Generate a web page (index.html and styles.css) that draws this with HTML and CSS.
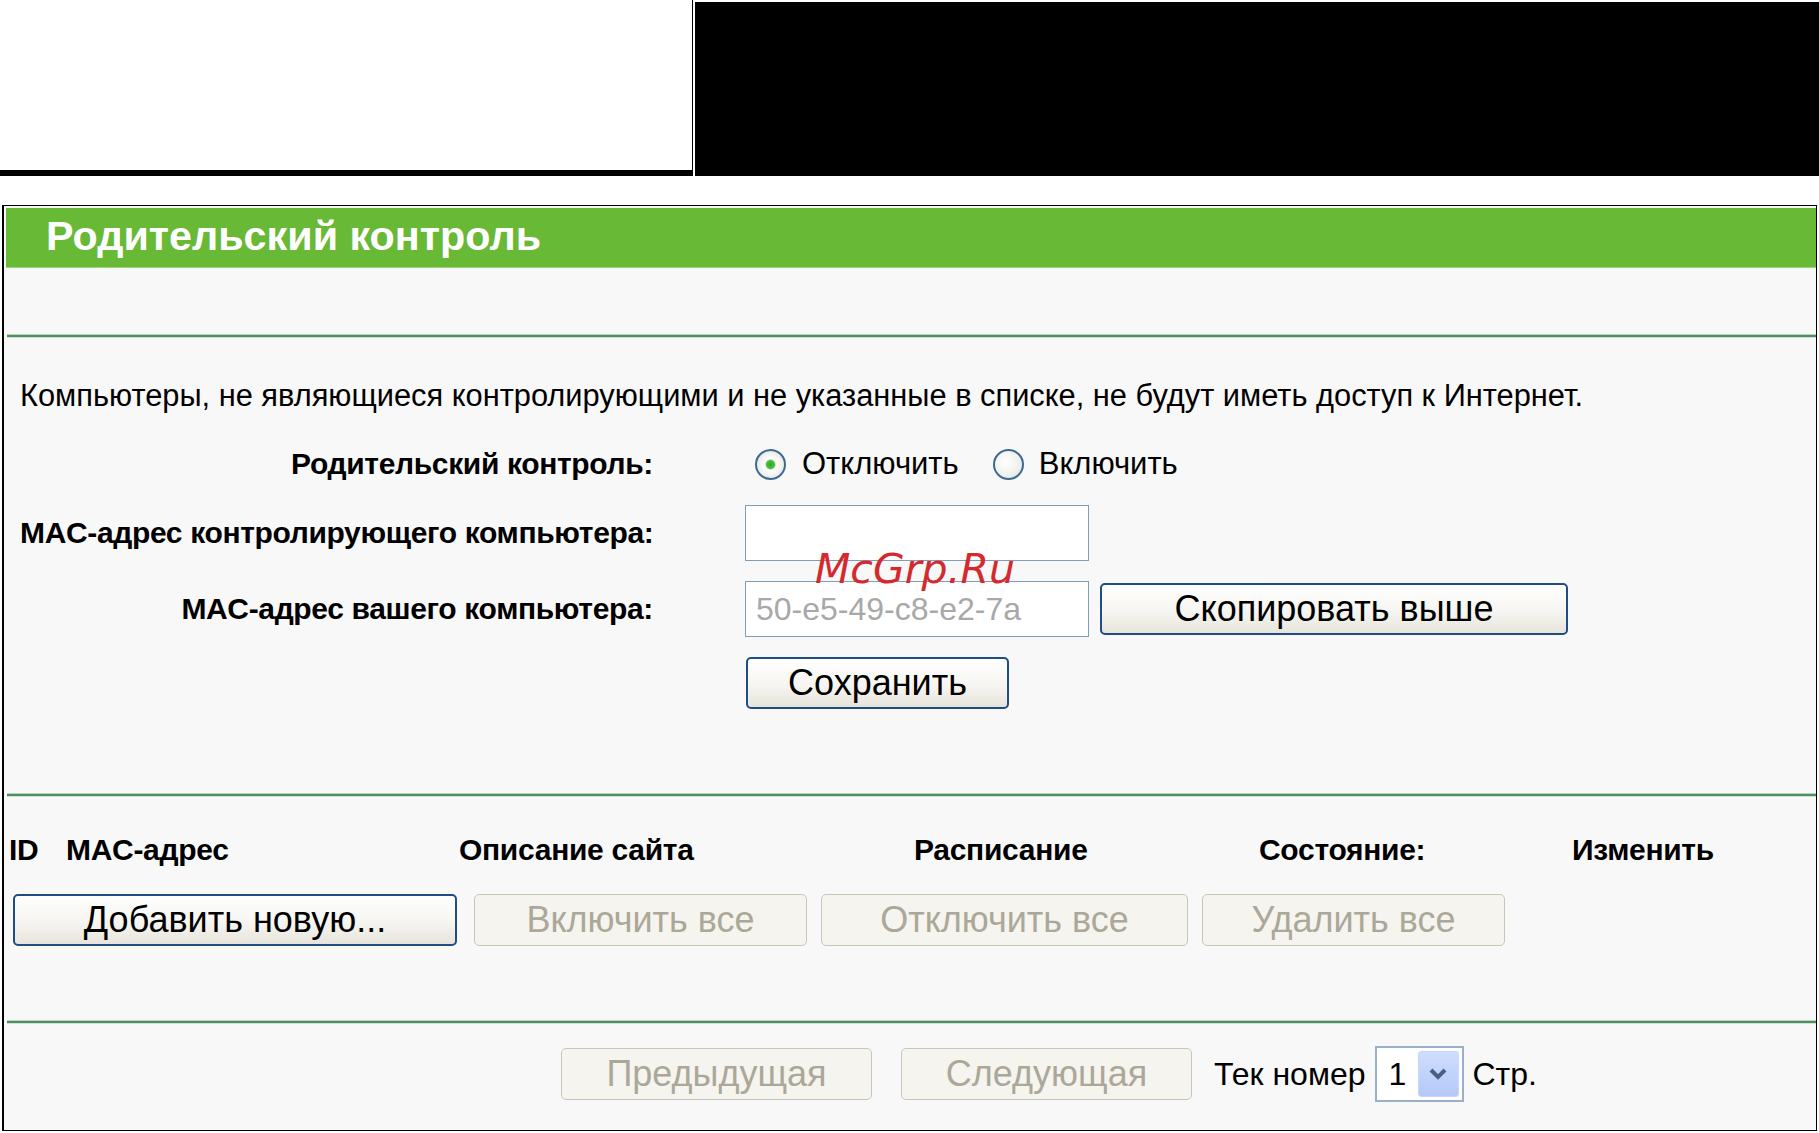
FILE: index.html
```html
<!DOCTYPE html>
<html lang="ru">
<head>
  <meta charset="UTF-8" />
  <title>Родительский контроль</title>
  <link rel="stylesheet" href="styles.css">
</head>
<body>

  <div class="topbar">
    <div class="logo-area"></div>
    <div class="banner"></div>
  </div>

  <div class="panel">
    <div class="panel-title">Родительский контроль</div>
    <div class="rule rule-first"></div>

    <p class="note">Компьютеры, не являющиеся контролирующими и не указанные в списке, не будут иметь доступ к Интернет.</p>

    <div class="form">
      <div class="form-row row-radio">
        <div class="form-label">Родительский контроль:</div>
        <div class="radios">
          <label class="radio"><input type="radio" name="pc" checked><span>Отключить</span></label>
          <label class="radio radio-second"><input type="radio" name="pc"><span>Включить</span></label>
        </div>
      </div>

      <div class="form-row row-input">
        <div class="form-label">MAC-адрес контролирующего компьютера:</div>
        <div class="field"><input class="text-input" type="text"></div>
      </div>

      <div class="form-row row-input row-own">
        <div class="form-label">MAC-адрес вашего компьютера:</div>
        <div class="field">
          <input class="text-input" type="text" value="50-e5-49-c8-e2-7a" readonly>
          <button class="btn btn-copy">Скопировать выше</button>
        </div>
      </div>

      <div class="form-row row-save">
        <div></div>
        <div class="field"><button class="btn btn-save">Сохранить</button></div>
      </div>
    </div>

    <div class="rule rule-second"></div>

    <div class="list-head">
      <span>ID</span>
      <span>MAC-адрес</span>
      <span>Описание сайта</span>
      <span>Расписание</span>
      <span>Состояние:</span>
      <span>Изменить</span>
    </div>

    <div class="list-actions">
      <button class="btn btn-add">Добавить новую...</button>
      <button class="btn btn-enable" disabled>Включить все</button>
      <button class="btn btn-disable" disabled>Отключить все</button>
      <button class="btn btn-delete" disabled>Удалить все</button>
    </div>

    <div class="rule rule-third"></div>

    <div class="pager">
      <button class="btn btn-prev" disabled>Предыдущая</button>
      <button class="btn btn-next" disabled>Следующая</button>
      <span class="pager-label">Тек номер</span>
      <div class="page-select">
        <span class="page-value">1</span>
        <span class="page-arrow">
          <svg width="20" height="14" viewBox="0 0 20 14"><path d="M3 3 L10 10 L17 3" fill="none" stroke="#4a5e82" stroke-width="4"/></svg>
        </span>
      </div>
      <span class="pager-unit">Стр.</span>
    </div>

    <div class="watermark">McGrp.Ru</div>
  </div>

</body>
</html>
```

FILE: styles.css
```css
body {
  margin: 0;
  background: #fff;
  font-family: 'Liberation Sans', Arial, sans-serif;
  color: #000;
}

/* top strip */
.topbar {
  display: flex;
  height: 176px;
}

.logo-area {
  width: 692px;
  height: 170px;
  background: #fff;
  border-right: 1px solid #000;
  border-bottom: 6px solid #000;
}

.banner {
  flex: 1;
  margin: 2px 0 0 2px;
  background: #000;
}

/* main panel */
.panel {
  position: relative;
  margin: 29px 2px 0 2px;
  height: 924px;
  background: #f8f8f8;
  border: 1px solid #000;
  border-left-width: 2px;
}

.panel-title {
  margin: 2px 0 0 2px;
  height: 59px;
  line-height: 56px;
  padding-left: 40px;
  background: #68b935;
  border-bottom: 1px solid #9fd47e;
  color: #fff;
  font-size: 41.3px;
  font-weight: bold;
}

.rule {
  height: 4px;
  margin-left: 3px;
  background: linear-gradient(#b7d4bf 0, #b7d4bf 1px, #4f8d62 1px, #4f8d62 3px, #cfe2d4 3px);
}

.rule-first { margin-top: 66px; }
.rule-second { margin-top: 84px; }
.rule-third { margin-top: 74px; }

.note {
  margin: 38px 0 0 16px;
  font-size: 30.8px;
  line-height: 40px;
}

/* form */
.form {
  padding-left: 16px;
}

.form-row {
  display: grid;
  grid-template-columns: 633px 1fr;
  column-gap: 92px;
  align-items: center;
  font-size: 30px;
  line-height: 40px;
}

.form-label {
  text-align: right;
  font-weight: bold;
  white-space: nowrap;
  letter-spacing: -0.35px;
}

.row-radio { margin-top: 28px; }
.row-input { margin-top: 21px; }
.row-own { margin-top: 20px; }
.row-save { margin-top: 20px; }

.radios {
  display: flex;
  align-items: center;
  padding-left: 10px;
  font-size: 31px;
}

.radio {
  display: flex;
  align-items: center;
}

.radio-second {
  margin-left: 34px;
}

.radio input {
  appearance: none;
  -webkit-appearance: none;
  width: 31px;
  height: 31px;
  margin: 0 16px 0 0;
  border: 2px solid #3d6a93;
  border-radius: 50%;
  background: radial-gradient(circle at 40% 40%, #fff 0, #f0f0ec 60%, #d6d6cf 100%);
  box-sizing: border-box;
}

.radio input:checked {
  background: radial-gradient(circle, #2ea82a 0, #45c03e 4px, #fff 5.5px, #f0f0ec 60%, #d6d6cf 100%);
}

.radio-second input {
  margin-right: 15px;
}

.field {
  display: flex;
  align-items: center;
}

.text-input {
  width: 344px;
  height: 56px;
  box-sizing: border-box;
  border: 1px solid #7f9db9;
  background: #fff;
  padding: 0 10px;
  font-family: inherit;
  font-size: 32px;
  color: #a8a8a8;
}

/* buttons */
.btn {
  height: 52px;
  padding: 0;
  box-sizing: border-box;
  border: 2px solid #1f4e83;
  border-radius: 5px;
  background: linear-gradient(#ffffff, #f6f5f1 55%, #e6e4da);
  font-family: inherit;
  font-size: 36px;
  color: #000;
}

.btn:disabled {
  border: 1px solid #c9c6b8;
  background: #f5f4ee;
  color: #aca899;
}

.btn-copy { width: 468px; margin-left: 11px; }
.btn-save { width: 263px; margin-left: 1px; }
.btn-add { width: 444px; }
.btn-enable { width: 333px; }
.btn-disable { width: 367px; }
.btn-delete { width: 303px; }
.btn-prev { width: 311px; }
.btn-next { width: 291px; }

/* list */
.list-head {
  display: grid;
  grid-template-columns: 57px 393px 455px 345px 313px auto;
  margin: 33px 0 0 5px;
  font-size: 30px;
  line-height: 40px;
  font-weight: bold;
  letter-spacing: -0.3px;
}

.list-actions {
  display: flex;
  gap: 14px;
  margin: 24px 0 0 9px;
}

.list-actions .btn-add {
  margin-right: 3px;
}

/* pager */
.pager {
  display: flex;
  align-items: center;
  margin: 22px 0 0 557px;
  font-size: 32px;
}

.btn-next { margin-left: 29px; }

.pager-label {
  margin: 0 9px 0 22px;
}

.page-select {
  display: flex;
  align-items: center;
  width: 89px;
  height: 56px;
  box-sizing: border-box;
  border: 2px solid #98b0c8;
  background: #fff;
}

.page-value {
  flex: 1;
  padding-left: 12px;
}

.page-arrow {
  display: flex;
  align-items: center;
  justify-content: center;
  width: 41px;
  height: 46px;
  margin-right: 3px;
  border: 1px solid #c7d6fb;
  border-radius: 3px;
  box-sizing: border-box;
  background: linear-gradient(#cfddfd, #b4c9f8);
}

.pager-unit {
  margin-left: 9px;
}

.watermark {
  position: absolute;
  left: 811px;
  top: 339px;
  font-family: 'DejaVu Sans', sans-serif;
  font-style: italic;
  font-size: 41px;
  color: #d42a2f;
}
```
